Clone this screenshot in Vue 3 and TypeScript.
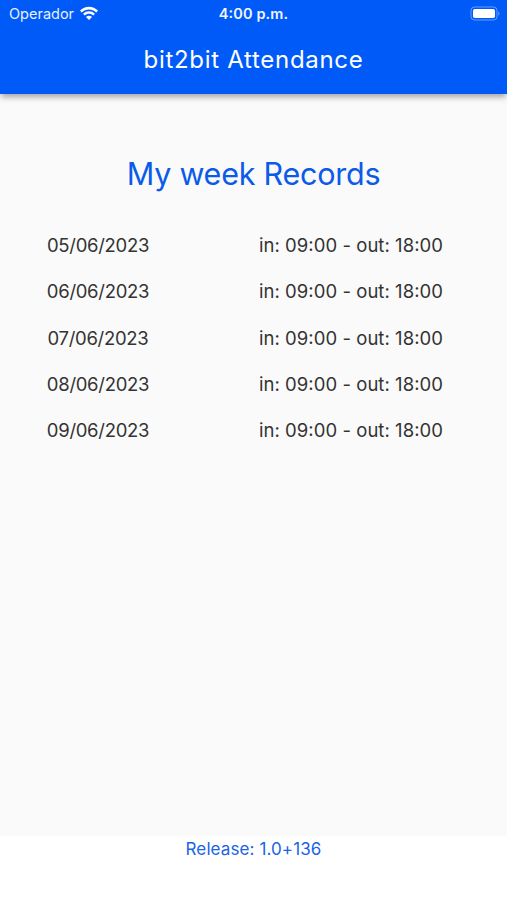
<script setup lang="ts">
interface AttendanceRecord {
  date: string
  checkIn: [string, string]
  checkOut: [string, string]
}

const dates = ['05/06/2023', '06/06/2023', '07/06/2023', '08/06/2023', '09/06/2023']

const records: AttendanceRecord[] = dates.map((date) => ({
  date,
  checkIn: ['09', '00'],
  checkOut: ['18', '00'],
}))
</script>

<template>
  <div class="screen">
    <header class="top">
      <div class="status">
        <div class="carrier">
          <span>Operador</span>
          <svg class="wifi" viewBox="0 0 20 14" width="20" height="14" aria-hidden="true">
            <path d="M1 4.600C6-.6 14-.6 19 4.600L17.300 6.400C13.200 2.400 6.800 2.400 2.700 6.400Z" />
            <path d="M4 7.700C7.400 4.400 12.600 4.400 16 7.700L14.200 9.500C11.800 7.200 8.200 7.200 5.800 9.500Z" />
            <path d="M7 10.900C8.700 9.300 11.300 9.300 13 10.900L10 13.900Z" />
          </svg>
        </div>
        <div class="time">4<span class="colon">:</span>00 p.m.</div>
        <div class="power">
          <svg viewBox="0 0 31 15" width="31" height="15" aria-hidden="true">
            <rect class="shell" x="1" y="1" width="26" height="13" rx="3.500" />
            <rect x="3" y="3" width="22" height="9" rx="1.800" />
            <path class="tip" d="M28.300 5.200Q30.800 7.500 28.300 9.800Z" />
          </svg>
        </div>
      </div>
      <h1>bit2bit Attendance</h1>
    </header>
    <main>
      <h2>My week Records</h2>
      <ul>
        <li v-for="r in records" :key="r.date">
          <span class="cell">{{ r.date }}</span>
          <span class="cell hours">in: {{ r.checkIn[0] }}<span class="colon">:</span>{{ r.checkIn[1] }} - out: {{ r.checkOut[0] }}<span class="colon">:</span>{{ r.checkOut[1] }}</span>
        </li>
      </ul>
    </main>
    <footer>Release: 1.0+136</footer>
  </div>
</template>

<style>
body {
  margin: 0;
}
</style>

<style scoped>
.screen {
  display: flex;
  flex-direction: column;
  height: 900px;
  overflow: hidden;
  background: #fff;
  font-family: Inter, 'Liberation Sans', sans-serif;
}
.top {
  position: relative;
  height: 94px;
  background: #005af8;
  color: #fff;
  box-shadow: 0 4px 6px -1px rgba(0, 0, 0, 0.35);
}
.status {
  display: grid;
  grid-template-columns: 1fr auto 1fr;
  align-items: center;
  height: 27px;
  padding: 0 6px;
  font-size: 14.500px;
}
.carrier {
  display: flex;
  align-items: center;
  gap: 5px;
  padding-left: 3px;
  color: #e8f0ff;
}
.wifi {
  margin-top: -1px;
}
.time {
  font-weight: 600;
  letter-spacing: 0.12px;
  color: #f2f6ff;
}
.colon {
  line-height: 0;
  vertical-align: 1px;
}
.power {
  display: flex;
  justify-content: flex-end;
}
svg {
  display: block;
  fill: #fff;
}
.shell {
  fill: none;
  stroke: #fff;
  stroke-opacity: 0.4;
}
.tip {
  fill-opacity: 0.4;
}
h1 {
  margin: 18px 0 0;
  text-align: center;
  font-size: 24px;
  line-height: 30px;
  font-weight: 400;
  letter-spacing: 0.7px;
}
main {
  flex: 1;
  background: #fafafa;
}
h2 {
  margin: 60px 0 0;
  text-align: center;
  color: #0b5be9;
  font-size: 30.500px;
  line-height: 40px;
  font-weight: 400;
  letter-spacing: -0.24px;
}
ul {
  margin: 27.600px 0 0;
  padding: 0;
  list-style: none;
}
li {
  display: grid;
  grid-template-columns: 196px 310px;
  height: 46.400px;
  align-items: center;
}
.cell {
  text-align: center;
  font-size: 18.500px;
  letter-spacing: -0.3px;
  color: #333;
}
.hours {
  letter-spacing: 0.05px;
}
footer {
  height: 64px;
  line-height: 26px;
  text-align: center;
  color: #1a63e6;
  font-size: 17px;
  letter-spacing: 0.1px;
}
</style>
